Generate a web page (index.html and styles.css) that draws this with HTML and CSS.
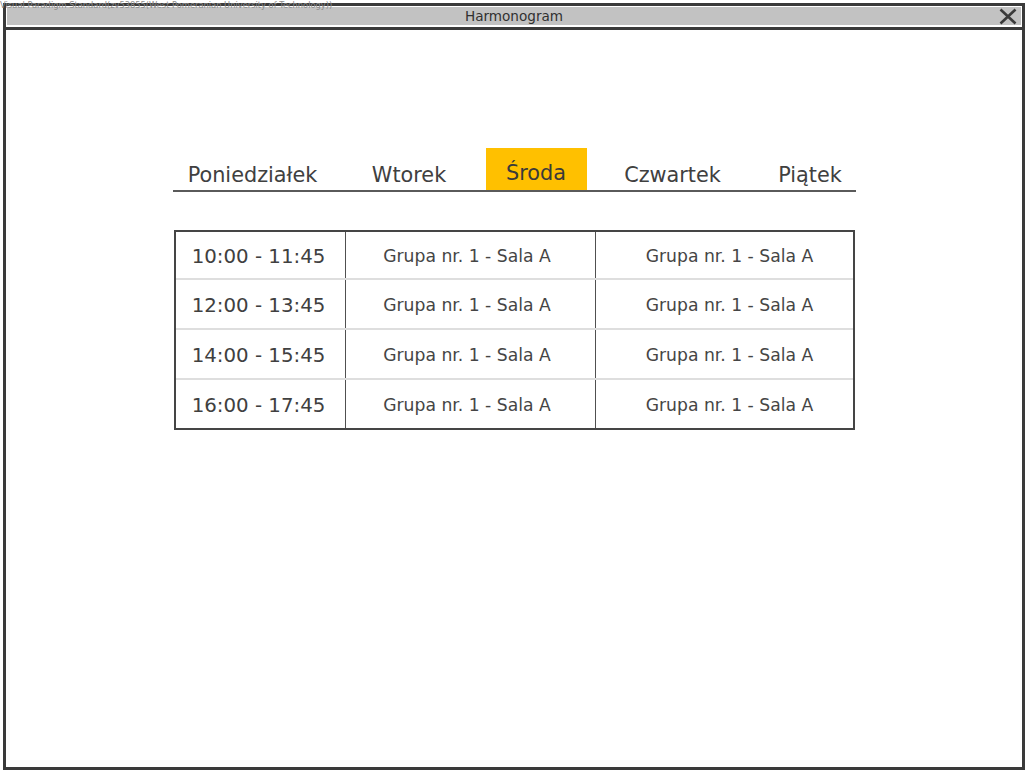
FILE: index.html
```html
<!DOCTYPE html>
<html lang="pl">
<head>
<meta charset="utf-8">
<title>Harmonogram</title>
<link rel="stylesheet" href="styles.css">
</head>
<body>
<div class="watermark">Visual Paradigm Standard(zv53855(West Pomeranian University of Technology))</div>
<div class="window">
  <div class="titlebar">
    <div class="titlebar-inner">
      <span></span>
      <span class="title">Harmonogram</span>
      <svg class="close" width="18" height="17" viewBox="0 0 18 17"><path d="M1.5 1.5 L16.5 15.5 M16.5 1.5 L1.5 15.5" stroke="#3a3a3a" stroke-width="2.6" fill="none"/></svg>
    </div>
  </div>
  <div class="content">
    <div class="tabs">
      <div class="tab">Poniedziałek</div>
      <div class="tab">Wtorek</div>
      <div class="tab active">Środa</div>
      <div class="tab">Czwartek</div>
      <div class="tab last">Piątek</div>
    </div>
    <div class="schedule">
      <div class="row">
        <div class="cell time">10:00 - 11:45</div>
        <div class="cell slot">Grupa nr. 1 - Sala A</div>
        <div class="cell slot wide">Grupa nr. 1 - Sala A</div>
      </div>
      <div class="row">
        <div class="cell time">12:00 - 13:45</div>
        <div class="cell slot">Grupa nr. 1 - Sala A</div>
        <div class="cell slot wide">Grupa nr. 1 - Sala A</div>
      </div>
      <div class="row">
        <div class="cell time">14:00 - 15:45</div>
        <div class="cell slot">Grupa nr. 1 - Sala A</div>
        <div class="cell slot wide">Grupa nr. 1 - Sala A</div>
      </div>
      <div class="row">
        <div class="cell time">16:00 - 17:45</div>
        <div class="cell slot">Grupa nr. 1 - Sala A</div>
        <div class="cell slot wide">Grupa nr. 1 - Sala A</div>
      </div>
    </div>
  </div>
</div>
</body>
</html>
```
FILE: styles.css
```css
* { box-sizing: border-box; }
html, body { margin: 0; padding: 0; background: #fff; }
body {
  font-family: "DejaVu Sans", sans-serif;
  color: #404040;
  width: 1030px;
  height: 774px;
  overflow: hidden;
  position: relative;
}
.watermark {
  position: absolute;
  top: 1px;
  left: 0;
  font-size: 8.3px;
  line-height: 9px;
  color: #8c8c8c;
  white-space: nowrap;
  z-index: 2;
}
.window {
  margin: 3px;
  width: 1022px;
  height: 767px;
  border: 3px solid #3a3a3a;
}
.titlebar {
  padding: 1px 1px 2px 1px;
  border-bottom: 3px solid #3a3a3a;
}
.titlebar-inner {
  height: 18px;
  background: #c2c2c2;
  display: grid;
  grid-template-columns: 1fr auto 1fr;
  align-items: center;
}
.title {
  font-size: 13.6px;
  color: #303030;
  line-height: 18px;
}
.close {
  justify-self: end;
  margin-right: 4px;
  display: block;
}
.content {
  width: 683px;
  margin: 118px auto 0;
}
.tabs {
  display: grid;
  grid-template-columns: 160px 153px 101px 172px 97px;
  height: 44px;
  border-bottom: 2px solid #5a5a5a;
}
.tab {
  font-size: 20.8px;
  color: #404040;
  text-align: center;
  padding-top: 15px;
  line-height: 25px;
}
.tab.active {
  background: #ffc000;
  padding-top: 13px;
  color: #3a3a3a;
}
.tab.last { padding-left: 6px; }
.schedule {
  margin: 38px 1px 0;
  height: 200px;
  border: 2px solid #454545;
  display: grid;
  grid-template-rows: 48px 50px 50px 1fr;
}
.row {
  display: grid;
  grid-template-columns: 169px 250px 1fr;
  border-bottom: 2px solid #dedede;
}
.row:last-child { border-bottom: none; }
.cell {
  display: flex;
  align-items: center;
  justify-content: center;
  padding-top: 2px;
}
.time {
  font-size: 19.8px;
  color: #404040;
  padding-right: 3px;
}
.slot {
  font-size: 17.2px;
  color: #454545;
  border-left: 1px solid #505050;
  padding-right: 6px;
}
.slot.wide { padding-left: 11px; padding-right: 0; }
```
